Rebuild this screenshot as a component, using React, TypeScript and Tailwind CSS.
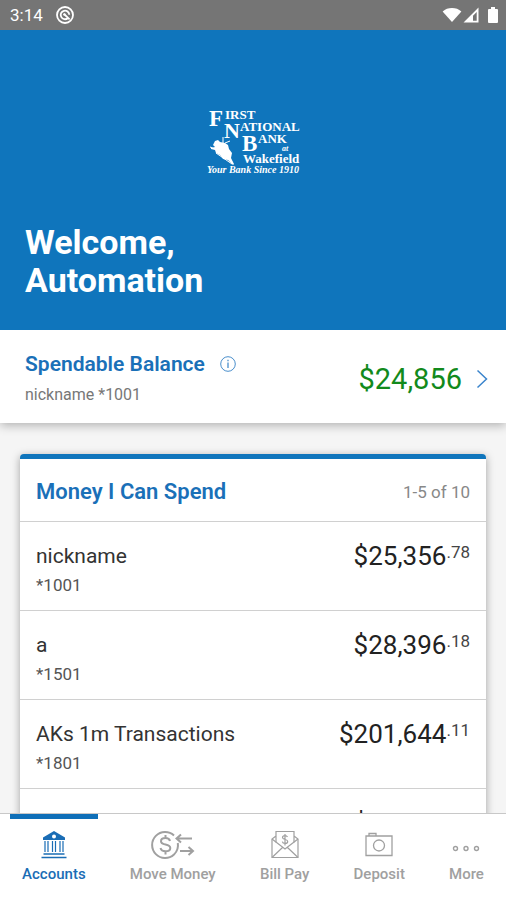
import type { ReactNode } from "react";

type Account = {
  name: string;
  mask: string;
  dollars: string;
  cents: string;
};

const accounts: Account[] = [
  { name: "nickname", mask: "*1001", dollars: "$25,356", cents: ".78" },
  { name: "a", mask: "*1501", dollars: "$28,396", cents: ".18" },
  { name: "AKs 1m Transactions", mask: "*1801", dollars: "$201,644", cents: ".11" },
  { name: "savings", mask: "*2001", dollars: "$24,856", cents: ".00" },
];

function StatusBar() {
  return (
    <div className="flex h-[30px] shrink-0 items-center justify-between bg-[#757575] pr-2 pl-[10px] text-white">
      <div className="flex items-center gap-3">
        <span className="text-[17px] leading-5">3:14</span>
        <svg width="20" height="20" viewBox="0 0 20 20" fill="none" stroke="currentColor" aria-hidden="true">
          <circle cx="10" cy="10" r="8" strokeWidth="1.800" />
          <path d="M12.800 13.200A4.300 4.300 0 1 1 14.300 9.800M9 9l5.600 5.400" strokeWidth="1.800" />
          <circle cx="9.400" cy="9.400" r="1.200" fill="currentColor" stroke="none" />
        </svg>
      </div>
      <svg width="56" height="18" viewBox="0 0 56 18" fill="currentColor" aria-hidden="true">
        <path d="M10 16 .6 5.400C3.200 3.200 6.400 2 10 2s6.800 1.200 9.400 3.400z" />
        <path d="M36.500 1.500V16.500H21.500zM34.700 6 31 9.800v5h3.700z" fillRule="evenodd" />
        <path d="M47 3h2V1h4v2h2q1 0 1 1v12q0 1-1 1h-8q-1 0-1-1V4q0-1 1-1z" />
      </svg>
    </div>
  );
}

function BankLogo() {
  return (
    <svg
      className="mx-auto block font-['Liberation_Serif',serif] font-bold"
      width="96"
      height="72"
      viewBox="0 0 96 72"
      fill="#fff"
      role="img"
      aria-label="First National Bank at Wakefield"
    >
      <text x="4" y="22" fontSize="23">F</text>
      <text x="20" y="15" fontSize="13">IRST</text>
      <text x="19" y="34" fontSize="22">N</text>
      <text x="35" y="27" fontSize="13">ATIONAL</text>
      <text x="37" y="47" fontSize="23">B</text>
      <text x="53" y="39" fontSize="13">ANK</text>
      <text x="77" y="47" fontSize="8" fontStyle="italic">at</text>
      <text x="38" y="59" fontSize="13">Wakefield</text>
      <text x="2" y="69" fontSize="10" fontStyle="italic">Your Bank Since 1910</text>
      <path d="M10 37l3-1 2 2 5 1 3 2 1 4 3 4-1 5 3 6-1 1-5-5-5-1-3-4-4-2-1-3-4-1v-1l4-1-2-2z" />
      <path d="M18 33v7M5 43l8 3M11 49l16 11M20 39l5-2" stroke="#fff" strokeWidth="1" fill="none" />
    </svg>
  );
}

function BankIcon() {
  return (
    <svg width="28" height="30" viewBox="0 0 28 30" fill="none" stroke="currentColor" aria-hidden="true">
      <path d="M14 1 3 7.500V10h22V7.500zM14 4.500a2 2 0 1 1 0 4 2 2 0 0 1 0-4z" fill="currentColor" fillRule="evenodd" stroke="none" />
      <path d="M5 11v11M8 11v11M12.500 11v11M15.500 11v11M20 11v11M23 11v11" strokeWidth="1.200" />
      <path d="M3.500 24h21M1.500 27.500h25" strokeWidth="1.600" />
    </svg>
  );
}

function MoveMoneyIcon() {
  return (
    <svg width="44" height="30" viewBox="0 0 44 30" fill="none" stroke="currentColor" strokeWidth="2" aria-hidden="true">
      <path d="M23 5.500A13 13 0 1 0 23 24.500M26.800 13a13 13 0 0 1-3.800 11.500" />
      <path d="M19 11c-.5-2-2-3-4.500-3S10 9.200 10 11.200s2 2.800 4.500 3.300 4.800 1.200 4.800 3.500-2 3.300-4.800 3.300-4.500-1.200-5-3.300M14.500 5v3M14.500 21v3.500" />
      <path d="M41 8.500H26M30 4.500l-4.500 4 4.500 4M29 21h13M37.500 17l4.500 4-4.500 4" />
    </svg>
  );
}

function BillPayIcon() {
  return (
    <svg width="28" height="30" viewBox="0 0 28 30" fill="none" stroke="currentColor" strokeWidth="1.200" aria-hidden="true">
      <path d="M5 12.500V1.500h18v11M5 6 1 9v18.500h26V9l-4-3" />
      <path d="M1 9l13 10L27 9M1 27.500l10.500-10M27 27.500l-10.500-10" />
      <path d="M16.500 7C16 6 15.200 5.600 14 5.600c-1.500 0-2.500.7-2.500 1.900 0 2.700 5.200 1.300 5.200 4 0 1.300-1.200 2-2.700 2s-2.400-.7-2.700-1.900M14 4v11.500" />
    </svg>
  );
}

function DepositIcon() {
  return (
    <svg width="28" height="30" viewBox="0 0 28 30" fill="none" stroke="currentColor" strokeWidth="1.300" aria-hidden="true">
      <path d="M1 6h26v19.500H1zM4 6V3.500h7V6" />
      <circle cx="14" cy="15.500" r="5.500" />
    </svg>
  );
}

function MoreIcon() {
  return (
    <svg width="28" height="30" viewBox="0 0 28 30" fill="none" stroke="currentColor" strokeWidth="1.400" aria-hidden="true">
      <circle cx="3.500" cy="18.500" r="2" />
      <circle cx="14" cy="18.500" r="2" />
      <circle cx="24.500" cy="18.500" r="2" />
    </svg>
  );
}

const tabs: { label: string; icon: ReactNode; active?: boolean }[] = [
  { label: "Accounts", icon: <BankIcon />, active: true },
  { label: "Move Money", icon: <MoveMoneyIcon /> },
  { label: "Bill Pay", icon: <BillPayIcon /> },
  { label: "Deposit", icon: <DepositIcon /> },
  { label: "More", icon: <MoreIcon /> },
];

function AccountRow({ account }: { account: Account }) {
  return (
    <li className="flex h-[89px] items-start justify-between border-t border-[#d0d0d0] px-4 pt-5">
      <div>
        <p className="text-[21px] leading-7 text-[#333]">{account.name}</p>
        <p className="mt-[3px] text-[17px] leading-6 text-[#555]">{account.mask}</p>
      </div>
      <p className="flex items-start text-[#222]">
        <span className="text-[26px] leading-7">{account.dollars}</span>
        <span className="text-[17px] leading-5 text-[#444]">{account.cents}</span>
      </p>
    </li>
  );
}

export default function App() {
  return (
    <div className="flex h-screen flex-col overflow-hidden bg-[#f5f5f5] font-[Roboto,sans-serif]">
      <StatusBar />

      <main className="min-h-0 flex-1 overflow-hidden">
        <header className="relative z-10 bg-[#0f75bc] px-[25px] pt-[74px] pb-[31px] text-white">
          <BankLogo />
          <h1 className="mt-[47px] text-[34px] leading-[38px] font-bold">
            Welcome,
            <br />
            Automation
          </h1>
        </header>

        <section className="flex items-center justify-between bg-white pt-5 pr-4 pb-4 pl-[25px] shadow-[0_2px_10px_rgba(0,0,0,0.3)]">
          <div>
            <div className="flex items-center gap-3.5">
              <h2 className="text-[21px] leading-7 font-semibold text-[#1a70b8]">Spendable Balance</h2>
              <button type="button" aria-label="About spendable balance" className="text-[#4a8fcc]">
                <svg width="18" height="18" viewBox="0 0 18 18" fill="none" stroke="currentColor" aria-hidden="true">
                  <circle cx="9" cy="9" r="7.300" />
                  <path d="M9 7.500V13M9 4.800v1.400" strokeWidth="1.300" />
                </svg>
              </button>
            </div>
            <p className="mt-[5px] text-[16px] leading-6 text-[#777]">nickname *1001</p>
          </div>
          <button type="button" className="flex items-center gap-3 text-[29px] leading-9 text-[#128a1c]">
            $24,856
            <svg width="16" height="20" viewBox="0 0 16 20" fill="none" stroke="#3a84cc" strokeWidth="1.500" aria-hidden="true">
              <path d="M3.500 1.500 12.500 10l-9 8.500" />
            </svg>
          </button>
        </section>

        <section className="mx-5 mt-[31px] rounded-t border-t-[5px] border-[#0f75bc] bg-white shadow-[0_2px_8px_rgba(0,0,0,0.35)]">
          <div className="flex h-[62px] items-center justify-between px-4 pt-1">
            <h2 className="text-[22px] leading-7 font-semibold text-[#1a70b8]">Money I Can Spend</h2>
            <p className="text-[17px] leading-6 text-[#888]">1-5 of 10</p>
          </div>
          <ul>
            {accounts.map((account) => (
              <AccountRow key={account.mask} account={account} />
            ))}
          </ul>
        </section>
      </main>

      <nav className="flex h-[87px] shrink-0 justify-around border-t border-[#c8c8c8] bg-white">
        {tabs.map((tab) => (
          <button
            key={tab.label}
            type="button"
            aria-current={tab.active ? "page" : undefined}
            className={
              tab.active
                ? "flex flex-col items-center border-t-[5px] border-[#0f6fb8] px-3 pt-[11px] text-[#1a6db5]"
                : "flex flex-col items-center border-t-[5px] border-transparent px-3 pt-[11px] text-[#a0a0a0]"
            }
          >
            {tab.icon}
            <span className="mt-1 text-[15px] leading-5 font-medium">{tab.label}</span>
          </button>
        ))}
      </nav>
    </div>
  );
}
